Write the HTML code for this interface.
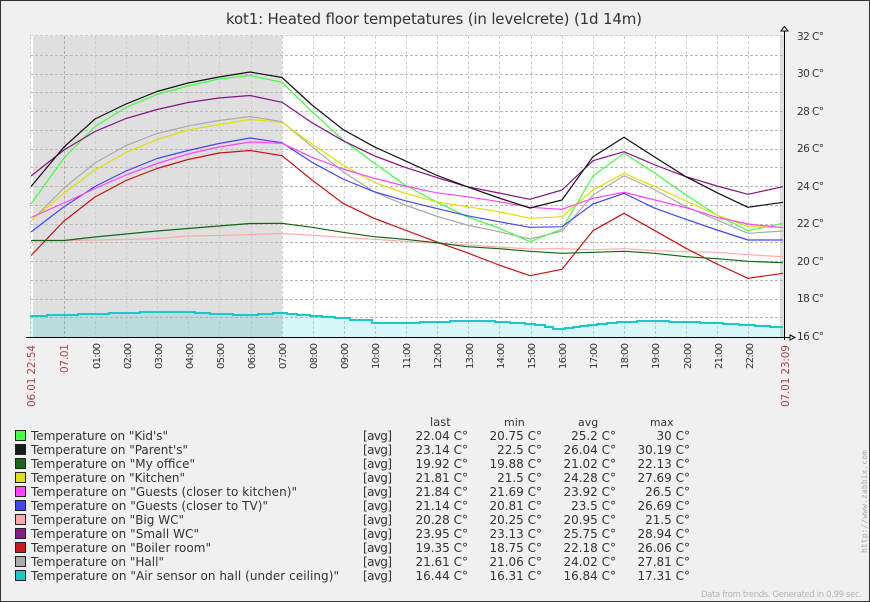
<!DOCTYPE html>
<html><head><meta charset="utf-8"><style>
html,body{margin:0;padding:0;background:#f0f0f0}
svg{display:block}
text{font-family:"DejaVu Sans","Liberation Sans",sans-serif;fill:#333}
.l{fill:none;stroke-width:1.2;stroke-linejoin:round}
.y{font-size:10.5px}
.x{font-size:10px;fill:#333}
.r{font-size:10.5px;fill:#a94442}
.t{font-size:12px}
.v{font-size:12px;text-anchor:end}
</style></head><body>
<svg width="870" height="602" viewBox="0 0 870 602" xmlns="http://www.w3.org/2000/svg">
<rect width="870" height="602" fill="#f0f0f0"/>
<rect x="0.5" y="0.5" width="869" height="601" fill="none" stroke="#333"/>
<text x="434" y="24" text-anchor="middle" font-size="15" textLength="416">kot1: Heated floor tempetatures (in levelcrete) (1d 14m)</text>

<rect x="30" y="36" width="754" height="301" fill="#fff"/>
<rect x="33" y="36" width="249" height="301" fill="#dfdfdf"/>
<rect x="780" y="36" width="4" height="301" fill="#dfdfdf"/>

<path fill="none" stroke="#cccccc" stroke-dasharray="3 2" d="M30 35.5H784"/>
<path fill="none" stroke="#b8b8b8" stroke-dasharray="3 2" d="M30 55.5H784M30 74.5H784M30 92.5H784M30 111.5H784M30 130.5H784M30 149.5H784M30 167.5H784M30 186.5H784M30 205.5H784M30 224.5H784M30 242.5H784M30 261.5H784M30 280.5H784M30 299.5H784M30 317.5H784"/>
<path fill="none" stroke="#cfcfcf" stroke-dasharray="3 2" d="M30.5 36V337M95.5 36V337M126.5 36V337M157.5 36V337M188.5 36V337M219.5 36V337M251.5 36V337M282.5 36V337M313.5 36V337M344.5 36V337M375.5 36V337M406.5 36V337M437.5 36V337M468.5 36V337M499.5 36V337M531.5 36V337M562.5 36V337M593.5 36V337M624.5 36V337M655.5 36V337M686.5 36V337M717.5 36V337M748.5 36V337"/>
<path fill="none" stroke="#adadad" stroke-dasharray="3 2" d="M64.5 36V337"/>

<path fill="rgba(0,204,204,.16)" d="M30 337V316H47V315H78V314H109V313H140V312H195V313H210V314H233V315H258V314H273V313H287V314H297V315H310V316H322V317H335V318H350V320H372V323H420V322H450V321H495V322H510V323H525V324H535V325H545V327H553V329H565V328H573V327H580V326H588V325H597V324H607V323H617V322H637V321H669V322H700V323H723V324H739V325H755V326H770V327H783V337Z"/>

<polyline class="l" stroke="#ffaaaa" points="31,240.5 64,240.5 95,240 126,239.5 157,238.5 188,236 219,235.5 250,234.5 282,233.5 312,235.3 343,237.3 374,239.3 405,241.3 436,243.3 467,245 499,247 530,249 562,248.7 593,249.7 624,248.7 655,250.7 686,251.7 717,252.3 748,254.7 783,256.7"/>
<polyline class="l" stroke="#aaaaaa" points="31,221 64,188 95,163 126,145.5 157,133.5 188,126 219,120.5 250,116.5 282,121.7 312,146.7 343,171.7 374,191.7 405,205 436,216 467,225 499,231.7 530,239 562,231 593,195 624,175.7 655,190 686,206.7 717,220 748,233.3 783,231"/>
<polyline class="l" stroke="#44ff44" points="31,204 64,158 95,126.5 126,107.5 157,94.5 188,86 219,79 250,75.5 282,82.3 312,111.7 343,140 374,163 405,185 436,201.7 467,216.7 499,228 530,241.7 562,229 593,176 624,153.3 655,173.3 686,195 717,215 748,230.7 783,223.3"/>
<polyline class="l" stroke="#e0e000" points="31,220.7 64,193 95,170 126,152.5 157,139.5 188,130 219,124.5 250,119.5 282,122.3 312,144 343,165 374,182.3 405,193.3 436,201.7 467,206.7 499,211.7 530,218.3 562,216.7 593,190 624,173.3 655,186.7 686,201 717,215 748,226.7 783,227.3"/>
<polyline class="l" stroke="#4444ff" points="31,232 64,206.7 95,186.5 126,171 157,158.5 188,150.5 219,143.5 250,138 282,142.7 312,162.3 343,179 374,191.7 405,200.7 436,208.3 467,215.7 499,221.7 530,227.3 562,226.7 593,204 624,193.3 655,208.3 686,219.3 717,230 748,240 783,240"/>
<polyline class="l" stroke="#ff44ff" points="31,217.5 64,203 95,188.5 126,175 157,163.5 188,154 219,147 250,142 282,143.3 312,157.3 343,169 374,178.3 405,186 436,192.7 467,196.7 499,201.7 530,207.3 562,209.3 593,198.3 624,192.3 655,200 686,207.7 717,217.3 748,224 783,227.7"/>
<polyline class="l" stroke="#cc1111" points="31,255.5 64,221 95,197 126,180.5 157,168.5 188,159.5 219,153 250,150.5 282,155.7 312,180 343,203.3 374,218.3 405,230 436,241.7 467,252.7 499,265 530,275.7 562,269.3 593,230.7 624,213.3 655,230.7 686,248.3 717,264 748,278.3 783,273.3"/>
<polyline class="l" stroke="#116611" points="31,240.5 64,240.5 95,237 126,234 157,231 188,228.5 219,226 250,223.5 282,223.3 312,227.3 343,232.3 374,236.7 405,239.3 436,242.7 467,246.7 499,248.7 530,251.3 562,253.3 593,252.3 624,251.3 655,253.3 686,256.7 717,258.7 748,261.3 783,262.7"/>
<polyline class="l" stroke="#881188" points="31,176 64,150 95,131.5 126,118.5 157,109.5 188,102.5 219,98 250,95.5 282,102.3 312,122.7 343,140.7 374,155.7 405,167.3 436,177.3 467,186.7 499,193 530,199.3 562,190 593,160.7 624,151.7 655,165 686,176.7 717,186 748,194.3 783,186.7"/>
<polyline class="l" stroke="#111111" points="31,186.5 64,147 95,119 126,104 157,91.5 188,83 219,77 250,72 282,77.5 312,105 343,129.5 374,146.7 405,160.7 436,175 467,186.7 499,198 530,208 562,200 593,156.7 624,137.3 655,157.3 686,176.7 717,192.7 748,207.3 783,202.3"/>
<path fill="none" stroke="#1ac8c8" stroke-width="2" shape-rendering="crispEdges" d="M30 316H47V315H78V314H109V313H140V312H195V313H210V314H233V315H258V314H273V313H287V314H297V315H310V316H322V317H335V318H350V320H372V323H420V322H450V321H495V322H510V323H525V324H535V325H545V327H553V329H565V328H573V327H580V326H588V325H597V324H607V323H617V322H637V321H669V322H700V323H723V324H739V325H755V326H770V327H783"/>

<path d="M784.5 30V340M26 337.5H790" stroke="#000" fill="none" shape-rendering="crispEdges"/>
<path d="M784.5 26.5L788 31H781Z" fill="#fff" stroke="#000" stroke-width="1"/>
<path d="M790 335L795 337.5L790 340Z" fill="#fff" stroke="#000" stroke-width="1"/>

<text class="y" x="797" y="40" textLength="27">32 C°</text>
<text class="y" x="797" y="77" textLength="27">30 C°</text>
<text class="y" x="797" y="115" textLength="27">28 C°</text>
<text class="y" x="797" y="152" textLength="27">26 C°</text>
<text class="y" x="797" y="190" textLength="27">24 C°</text>
<text class="y" x="797" y="227" textLength="27">22 C°</text>
<text class="y" x="797" y="265" textLength="27">20 C°</text>
<text class="y" x="797" y="302" textLength="27">18 C°</text>
<text class="y" x="797" y="340" textLength="27">16 C°</text>

<text class="r" transform="translate(35,407) rotate(-90)" textLength="62">06.01 22:54</text>
<text class="r" transform="translate(68,373) rotate(-90)" textLength="29">07.01</text>
<text class="r" transform="translate(789,407) rotate(-90)" textLength="62">07.01 23:09</text>
<text class="x" transform="translate(100,369) rotate(-90)" textLength="26">01:00</text>
<text class="x" transform="translate(131,369) rotate(-90)" textLength="26">02:00</text>
<text class="x" transform="translate(162,369) rotate(-90)" textLength="26">03:00</text>
<text class="x" transform="translate(193,369) rotate(-90)" textLength="26">04:00</text>
<text class="x" transform="translate(224,369) rotate(-90)" textLength="26">05:00</text>
<text class="x" transform="translate(255,369) rotate(-90)" textLength="26">06:00</text>
<text class="x" transform="translate(286,369) rotate(-90)" textLength="26">07:00</text>
<text class="x" transform="translate(317,369) rotate(-90)" textLength="26">08:00</text>
<text class="x" transform="translate(348,369) rotate(-90)" textLength="26">09:00</text>
<text class="x" transform="translate(379,369) rotate(-90)" textLength="26">10:00</text>
<text class="x" transform="translate(410,369) rotate(-90)" textLength="26">11:00</text>
<text class="x" transform="translate(441,369) rotate(-90)" textLength="26">12:00</text>
<text class="x" transform="translate(473,369) rotate(-90)" textLength="26">13:00</text>
<text class="x" transform="translate(504,369) rotate(-90)" textLength="26">14:00</text>
<text class="x" transform="translate(535,369) rotate(-90)" textLength="26">15:00</text>
<text class="x" transform="translate(566,369) rotate(-90)" textLength="26">16:00</text>
<text class="x" transform="translate(597,369) rotate(-90)" textLength="26">17:00</text>
<text class="x" transform="translate(628,369) rotate(-90)" textLength="26">18:00</text>
<text class="x" transform="translate(659,369) rotate(-90)" textLength="26">19:00</text>
<text class="x" transform="translate(691,369) rotate(-90)" textLength="26">20:00</text>
<text class="x" transform="translate(722,369) rotate(-90)" textLength="26">21:00</text>
<text class="x" transform="translate(753,369) rotate(-90)" textLength="26">22:00</text>

<g stroke="#222" shape-rendering="crispEdges">
<rect x="15.5" y="430.5" width="10" height="10" fill="#44ff44"/>
<rect x="15.5" y="444.5" width="10" height="10" fill="#1a1a1a"/>
<rect x="15.5" y="458.5" width="10" height="10" fill="#1a661a"/>
<rect x="15.5" y="472.5" width="10" height="10" fill="#e0e01a"/>
<rect x="15.5" y="486.5" width="10" height="10" fill="#ff44ff"/>
<rect x="15.5" y="500.5" width="10" height="10" fill="#4444ff"/>
<rect x="15.5" y="514.5" width="10" height="10" fill="#ffaaaa"/>
<rect x="15.5" y="528.5" width="10" height="10" fill="#881a88"/>
<rect x="15.5" y="542.5" width="10" height="10" fill="#cc1a1a"/>
<rect x="15.5" y="556.5" width="10" height="10" fill="#aaaaaa"/>
<rect x="15.5" y="570.5" width="10" height="10" fill="#1ac8c8"/>
</g>
<text class="t" x="31" y="440" textLength="137">Temperature on "Kid's"</text>
<text class="t" x="31" y="454" textLength="157">Temperature on "Parent's"</text>
<text class="t" x="31" y="468" textLength="164">Temperature on "My office"</text>
<text class="t" x="31" y="482" textLength="154">Temperature on "Kitchen"</text>
<text class="t" x="31" y="496" textLength="266">Temperature on "Guests (closer to kitchen)"</text>
<text class="t" x="31" y="510" textLength="237">Temperature on "Guests (closer to TV)"</text>
<text class="t" x="31" y="524" textLength="153">Temperature on "Big WC"</text>
<text class="t" x="31" y="538" textLength="168">Temperature on "Small WC"</text>
<text class="t" x="31" y="552" textLength="180">Temperature on "Boiler room"</text>
<text class="t" x="31" y="566" textLength="133">Temperature on "Hall"</text>
<text class="t" x="31" y="580" textLength="308">Temperature on "Air sensor on hall (under ceiling)"</text>

<text x="430" y="426" font-size="11.5">last</text><text x="504" y="426" font-size="11">min</text><text x="578" y="426" font-size="11">avg</text><text x="650" y="426" font-size="10.8">max</text>

<g class="rows">
<text class="t" x="363" y="440" textLength="29">[avg]</text><text class="v" x="468" y="440">22.04 C°</text><text class="v" x="542" y="440">20.75 C°</text><text class="v" x="616" y="440">25.2 C°</text><text class="v" x="690" y="440">30 C°</text>
<text class="t" x="363" y="454" textLength="29">[avg]</text><text class="v" x="468" y="454">23.14 C°</text><text class="v" x="542" y="454">22.5 C°</text><text class="v" x="616" y="454">26.04 C°</text><text class="v" x="690" y="454">30.19 C°</text>
<text class="t" x="363" y="468" textLength="29">[avg]</text><text class="v" x="468" y="468">19.92 C°</text><text class="v" x="542" y="468">19.88 C°</text><text class="v" x="616" y="468">21.02 C°</text><text class="v" x="690" y="468">22.13 C°</text>
<text class="t" x="363" y="482" textLength="29">[avg]</text><text class="v" x="468" y="482">21.81 C°</text><text class="v" x="542" y="482">21.5 C°</text><text class="v" x="616" y="482">24.28 C°</text><text class="v" x="690" y="482">27.69 C°</text>
<text class="t" x="363" y="496" textLength="29">[avg]</text><text class="v" x="468" y="496">21.84 C°</text><text class="v" x="542" y="496">21.69 C°</text><text class="v" x="616" y="496">23.92 C°</text><text class="v" x="690" y="496">26.5 C°</text>
<text class="t" x="363" y="510" textLength="29">[avg]</text><text class="v" x="468" y="510">21.14 C°</text><text class="v" x="542" y="510">20.81 C°</text><text class="v" x="616" y="510">23.5 C°</text><text class="v" x="690" y="510">26.69 C°</text>
<text class="t" x="363" y="524" textLength="29">[avg]</text><text class="v" x="468" y="524">20.28 C°</text><text class="v" x="542" y="524">20.25 C°</text><text class="v" x="616" y="524">20.95 C°</text><text class="v" x="690" y="524">21.5 C°</text>
<text class="t" x="363" y="538" textLength="29">[avg]</text><text class="v" x="468" y="538">23.95 C°</text><text class="v" x="542" y="538">23.13 C°</text><text class="v" x="616" y="538">25.75 C°</text><text class="v" x="690" y="538">28.94 C°</text>
<text class="t" x="363" y="552" textLength="29">[avg]</text><text class="v" x="468" y="552">19.35 C°</text><text class="v" x="542" y="552">18.75 C°</text><text class="v" x="616" y="552">22.18 C°</text><text class="v" x="690" y="552">26.06 C°</text>
<text class="t" x="363" y="566" textLength="29">[avg]</text><text class="v" x="468" y="566">21.61 C°</text><text class="v" x="542" y="566">21.06 C°</text><text class="v" x="616" y="566">24.02 C°</text><text class="v" x="690" y="566">27.81 C°</text>
<text class="t" x="363" y="580" textLength="29">[avg]</text><text class="v" x="468" y="580">16.44 C°</text><text class="v" x="542" y="580">16.31 C°</text><text class="v" x="616" y="580">16.84 C°</text><text class="v" x="690" y="580">17.31 C°</text>
</g>

<text x="701" y="597" font-size="8.5" style="fill:#b4b4b4" textLength="161">Data from trends. Generated in 0.99 sec.</text>
<text transform="translate(867,553) rotate(-90)" font-size="8" style="fill:#a8a8a8;font-family:'DejaVu Sans Mono',monospace" textLength="103">http://www.zabbix.com</text>
</svg>
</body></html>
